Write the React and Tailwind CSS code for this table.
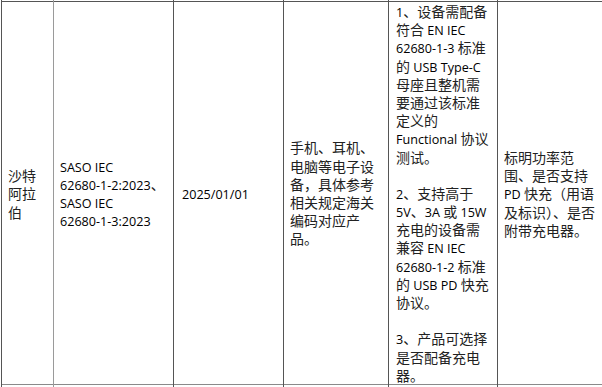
import React from "react";

const L = ({ children }) => (
  <span className="font-['Open_Sans'] text-[12.6px] text-[#000]">{children}</span>
);

const Lines = ({ lines }) => (
  <div>
    {lines.map((ln, i) => (
      <div key={i} className="h-[18.2px] leading-[18.2px] whitespace-nowrap">
        {ln}
      </div>
    ))}
  </div>
);

const Cell = ({ w, children, center = true, last = false, pl = "pl-[6px]", line = "border-[#6b6b6b]" }) => (
  <div
    className={`${w} h-[387px] pt-[1px] ${last ? "flex-1" : `border-r ${line} shrink-0`}`}
  >
    <div
      className={`h-[384px] border-t border-b border-t-[#555] border-b-[#8a8a8a] flex ${
        center ? "items-center" : "items-start"
      } ${pl}`}
    >
      {children}
    </div>
  </div>
);

export default function App() {
  return (
    <div className="w-[602px] h-[387px] overflow-hidden bg-white text-[14px] text-[#222] font-['Noto_Sans_CJK_SC',sans-serif]">
      <div className="ml-[1px] flex border-l border-[#555] h-[387px]">
        <Cell w="w-[52px]" pl="pl-[6px]" line="border-[#9a9a9a]">
          <div className="pt-[1px]">
            <Lines lines={["沙特", "阿拉", "伯"]} />
          </div>
        </Cell>
        <Cell w="w-[120px]" pl="pl-[6px]" line="border-[#555]">
          <Lines
            lines={[
              <L>SASO IEC</L>,
              <>
                <L>62680-1-2:2023</L>、
              </>,
              <L>SASO IEC</L>,
              <L>62680-1-3:2023</L>,
            ]}
          />
        </Cell>
        <Cell w="w-[110px]" pl="pl-[8px]" line="border-[#555]">
          <Lines lines={[<L>2025/01/01</L>]} />
        </Cell>
        <Cell w="w-[105px]" pl="pl-[6px]" line="border-[#555]">
          <Lines
            lines={[
              "手机、耳机、",
              "电脑等电子设",
              "备，具体参考",
              "相关规定海关",
              "编码对应产",
              "品。",
            ]}
          />
        </Cell>
        <Cell w="w-[109px]" center={false} pl="pl-[7px]" line="border-[#555]">
          <Lines
            lines={[
              <>
                <L>1</L>、设备需配备
              </>,
              <>
                符合<L> EN IEC</L>
              </>,
              <>
                <L>62680-1-3 </L>标准
              </>,
              <>
                的<L> USB Type-C</L>
              </>,
              "母座且整机需",
              "要通过该标准",
              "定义的",
              <>
                <L>Functional </L>协议
              </>,
              "测试。",
              "",
              <>
                <L>2</L>、支持高于
              </>,
              <>
                <L>5V</L>、<L>3A </L>或<L> 15W</L>
              </>,
              "充电的设备需",
              <>
                兼容<L> EN IEC</L>
              </>,
              <>
                <L>62680-1-2 </L>标准
              </>,
              <>
                的<L> USB PD </L>快充
              </>,
              "协议。",
              "",
              <>
                <L>3</L>、产品可选择
              </>,
              "是否配备充电",
              "器。",
            ]}
          />
        </Cell>
        <Cell w="" last pl="pl-[6px]">
          <div className="pt-[1px]">
            <Lines
              lines={[
                "标明功率范",
                "围、是否支持",
                <>
                  <L>PD </L>快充（用语
                </>,
                "及标识）、是否",
                "附带充电器。",
              ]}
            />
          </div>
        </Cell>
      </div>
    </div>
  );
}
